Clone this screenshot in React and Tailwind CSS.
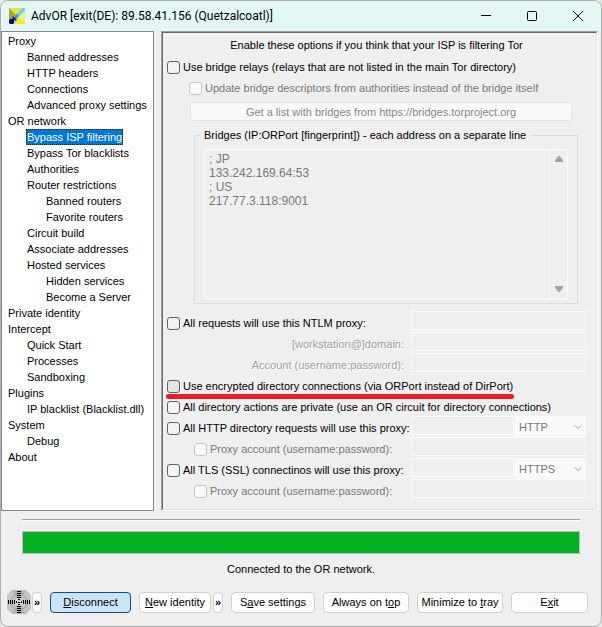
import React, { useState } from 'react'
import { ChevronDown } from 'lucide-react'

const pages = [
  { name: 'Proxy', level: 0 },
  { name: 'Banned addresses', level: 1 },
  { name: 'HTTP headers', level: 1 },
  { name: 'Connections', level: 1 },
  { name: 'Advanced proxy settings', level: 1 },
  { name: 'OR network', level: 0 },
  { name: 'Bypass ISP filtering', level: 1 },
  { name: 'Bypass Tor blacklists', level: 1 },
  { name: 'Authorities', level: 1 },
  { name: 'Router restrictions', level: 1 },
  { name: 'Banned routers', level: 2 },
  { name: 'Favorite routers', level: 2 },
  { name: 'Circuit build', level: 1 },
  { name: 'Associate addresses', level: 1 },
  { name: 'Hosted services', level: 1 },
  { name: 'Hidden services', level: 2 },
  { name: 'Become a Server', level: 2 },
  { name: 'Private identity', level: 0 },
  { name: 'Intercept', level: 0 },
  { name: 'Quick Start', level: 1 },
  { name: 'Processes', level: 1 },
  { name: 'Sandboxing', level: 1 },
  { name: 'Plugins', level: 0 },
  { name: 'IP blacklist (Blacklist.dll)', level: 1 },
  { name: 'System', level: 0 },
  { name: 'Debug', level: 1 },
  { name: 'About', level: 0 },
]

const indents = ['pl-[5px]', 'pl-6', 'pl-[43px]']

function AppLogo() {
  return (
    <svg viewBox="0 0 16 16" className="size-4 shrink-0" aria-hidden="true">
      <rect width="16" height="16" fill="#dede20" />
      <path d="M0 0H16L8 8Z" fill="#d8e850" />
      <path d="M0 0L8 8L0 16Z" fill="#a0b010" />
      <path d="M0 16L8 8L16 16Z" fill="#f0f000" />
      <path d="M16 0V16L8 8Z" fill="#e8f090" />
      <path d="M8 8L15.5 0.5" stroke="#80c8f8" strokeWidth="3.6" />
      <path d="M5.5 10.5L9 7" stroke="#4090e0" strokeWidth="2.6" />
      <path d="M4 8L8 12L6.5 13L3 9.5Z" fill="#1030c0" />
      <circle cx="2.6" cy="13.4" r="2.6" fill="#0000a0" />
      <rect x="4" y="10" width="2" height="2" fill="#0008e0" />
    </svg>
  )
}

function TitleBar() {
  return (
    <header className="flex h-[30px] items-center bg-[#e4f7f5] pl-2">
      <AppLogo />
      <h1 className="ml-1.5 flex-1 truncate font-[Roboto,sans-serif] text-[12px]">
        AdvOR [exit(DE): 89.58.41.156 (Quetzalcoatl)]
      </h1>
      <button aria-label="Minimize" className="flex h-full w-[46px] items-center justify-center">
        <svg viewBox="0 0 10 10" className="size-[10px]" fill="none" stroke="#000" shapeRendering="crispEdges">
          <path d="M0 4.5H10" />
        </svg>
      </button>
      <button aria-label="Maximize" className="flex h-full w-[46px] items-center justify-center">
        <svg viewBox="0 0 10 10" className="size-[10px]" fill="none" stroke="#000">
          <rect x="0.5" y="0.5" width="9" height="9" rx="1" />
        </svg>
      </button>
      <button aria-label="Close" className="flex h-full w-[46px] items-center justify-center">
        <svg viewBox="0 0 10 10" className="size-[10px]" fill="none" stroke="#000">
          <path d="M0 0L10 10M10 0L0 10" />
        </svg>
      </button>
    </header>
  )
}

function Sidebar({ page, setPage }) {
  return (
    <nav className="w-[153px] shrink-0 border border-[#828790] bg-white py-px">
      <ul>
        {pages.map((p) => (
          <li key={p.name} className={`flex ${indents[p.level]}`}>
            <button
              onClick={() => setPage(p.name)}
              className={
                page === p.name
                  ? 'h-4 whitespace-nowrap bg-[#0078d7] px-px text-white outline-1 -outline-offset-1 outline-dotted outline-[#3a2000]'
                  : 'h-4 whitespace-nowrap px-px'
              }
            >
              {p.name}
            </button>
          </li>
        ))}
      </ul>
    </nav>
  )
}

function Check({ label, disabled, pressed, className = '' }) {
  return (
    <label className={`flex items-center gap-[3px] whitespace-nowrap leading-4 ${disabled ? 'text-[#787878]' : ''} ${className}`}>
      <input
        type="checkbox"
        disabled={disabled}
        className={`size-[13px] shrink-0 appearance-none rounded-[3px] border ${
          disabled ? 'border-[#c5c5c5] bg-[#f9f9f9]' : pressed ? 'border-[#626262] bg-[#e6e6e6]' : 'border-[#626262] bg-[#f3f3f3]'
        } checked:bg-[#0067c0]`}
      />
      {label}
    </label>
  )
}

function Field({ label }) {
  return (
    <input
      type="text"
      disabled
      aria-label={label}
      className="h-[19px] min-w-0 flex-1 border border-[#fbfbfb] bg-[#efefef] px-1"
    />
  )
}

function ProxyType({ label, value }) {
  return (
    <div className="relative w-[71px] shrink-0 text-[#787878]">
      <select disabled aria-label={label} defaultValue={value} className="h-[21px] w-full appearance-none bg-[#fafafa] pl-1 opacity-100">
        <option>HTTP</option>
        <option>HTTPS</option>
        <option>SOCKS4</option>
        <option>SOCKS5</option>
      </select>
      <ChevronDown size={12} strokeWidth={2} className="pointer-events-none absolute top-[5px] right-[2px] text-[#a0a0a0]" />
    </div>
  )
}

// label column on the left, field column on the right
function Row({ left, children }) {
  return (
    <div className="flex h-[21px] items-start">
      <div className="w-[244px] shrink-0 pt-1">{left}</div>
      <div className="flex min-w-0 flex-1 gap-px">{children}</div>
    </div>
  )
}

function EtchedLabel({ children }) {
  return (
    <p className="pr-[7px] text-right leading-4 text-[#a0a0a0] [text-shadow:1px_1px_0_#fff]">{children}</p>
  )
}

function BridgeList() {
  return (
    <fieldset className="ml-[27px] mr-2 border border-[#dcdcdc] px-[9px] pb-1">
      <legend className="-ml-1 px-1 leading-4">Bridges (IP:ORPort [fingerprint]) - each address on a separate line</legend>
      <div className="mt-[6px] flex h-[150px] border border-[#fbfbfb]">
        <textarea
          disabled
          aria-label="Bridges"
          defaultValue={'; JP\n133.242.169.64:53\n; US\n217.77.3.118:9001'}
          className="min-w-0 flex-1 resize-none overflow-hidden py-0.5 pl-1 text-[12px] leading-[14px] text-[#787878]"
        />
        <div className="flex w-[18px] flex-col items-center justify-between border-l border-[#fbfbfb] py-1.5">
          <svg viewBox="0 0 8 6" className="h-1.5 w-2" fill="#a3a3a3" aria-hidden="true">
            <path d="M3.3 0H4.7L8 4.5V6H0V4.5Z" />
          </svg>
          <svg viewBox="0 0 8 6" className="h-1.5 w-2" fill="#a3a3a3" aria-hidden="true">
            <path d="M3.3 6H4.7L8 1.5V0H0V1.5Z" />
          </svg>
        </div>
      </div>
    </fieldset>
  )
}

function BypassPanel() {
  return (
    <main className="min-w-0 flex-1 border border-t-[#a0a0a0] border-l-[#a0a0a0] border-r-white border-b-white">
      <div className="h-full border border-t-[#696969] border-l-[#696969] border-r-[#e3e3e3] border-b-[#e3e3e3] pl-1 pr-[10px] pb-[9px]">
        <p className="pt-1 text-center leading-4">Enable these options if you think that your ISP is filtering Tor</p>
        <Check className="mt-1.5" label="Use bridge relays (relays that are not listed in the main Tor directory)" />
        <Check className="mt-[5px] ml-[22px]" disabled label="Update bridge descriptors from authorities instead of the bridge itself" />
        <div className="my-1.5 flex pl-[23px] pr-[14px]">
          <button disabled className="h-[19px] flex-1 rounded-[3px] border border-[#e6e6e6] bg-[#f9f9f9] leading-4 text-[#878787]">
            Get a list with bridges from https://bridges.torproject.org
          </button>
        </div>
        <BridgeList />

        <div className="mt-[7px]">
          <Row left={<Check label="All requests will use this NTLM proxy:" />}>
            <Field label="NTLM proxy" />
          </Row>
          <Row left={<EtchedLabel>[workstation@]domain:</EtchedLabel>}>
            <Field label="NTLM domain" />
          </Row>
          <Row left={<EtchedLabel>Account (username:password):</EtchedLabel>}>
            <Field label="NTLM account" />
          </Row>
          <div className="relative h-[21px] pt-1">
            <Check pressed label="Use encrypted directory connections (via ORPort instead of DirPort)" />
            {/* marker stroke under the option */}
            <span className="absolute top-5 -left-px h-[5px] w-[348px] rounded-sm bg-[#ee1c24]" />
          </div>
          <div className="h-[21px] pt-1">
            <Check label="All directory actions are private (use an OR circuit for directory connections)" />
          </div>
          <Row left={<Check label="All HTTP directory requests will use this proxy:" />}>
            <Field label="HTTP directory proxy" />
            <ProxyType label="HTTP directory proxy type" value="HTTP" />
          </Row>
          <Row left={<Check className="ml-[27px]" disabled label="Proxy account (username:password):" />}>
            <Field label="HTTP proxy account" />
          </Row>
          <Row left={<Check label="All TLS (SSL) connectinos will use this proxy:" />}>
            <Field label="TLS proxy" />
            <ProxyType label="TLS proxy type" value="HTTPS" />
          </Row>
          <Row left={<Check className="ml-[27px]" disabled label="Proxy account (username:password):" />}>
            <Field label="TLS proxy account" />
          </Row>
        </div>
      </div>
    </main>
  )
}

function Btn({ children, className = '' }) {
  return (
    <button className={`h-[21px] whitespace-nowrap rounded-[4px] border border-[#d0d0d0] bg-[#fdfdfd] leading-4 ${className}`}>
      {children}
    </button>
  )
}

function Onion() {
  return (
    <svg viewBox="0 0 24 24" className="block size-6" aria-hidden="true">
      <path d="M5 0H19L24 5V19L19 24H5L0 19V5Z" fill="#c4c4c4" />
      <path d="M12 12L5 0.5H19ZM12 12L5 23.5H19Z" fill="#b2b2b2" />
      <circle cx="12" cy="12" r="8" fill="none" stroke="#a4a4a4" />
      <circle cx="12" cy="12" r="4" fill="#d2d2d2" />
      <g stroke="#000" fill="none" shapeRendering="crispEdges">
        <path d="M10 1.5H14M10 3.5H14M10 5.5H14M10 7.5H14M11 9.5H13" />
        <path d="M11 14.5H13M10 16.5H14M10 18.5H14M10 20.5H14M10 22.5H14" />
        <path d="M1.5 10V14M3.5 10V14M5.5 10V14M7.5 10V14M9.5 11V13" />
        <path d="M14.5 11V13M16.5 10V14M18.5 10V14M20.5 10V14M22.5 10V14" />
        <path d="M11 12.5H13" />
      </g>
    </svg>
  )
}

function Footer() {
  return (
    <footer className="pb-3">
      <div className="mx-[21px] mt-2 h-0.5 border-t border-b border-t-[#a0a0a0] border-b-white" />
      <div role="progressbar" aria-label="Connection" aria-valuenow={100} className="mx-[21px] mt-2.5 h-[23px] border border-[#bcbcbc] bg-[#06b025]" />
      <p className="mt-[7px] text-center leading-4">Connected to the OR network.</p>
      <div className="mt-[13px] flex items-center gap-2 pl-1.5 pr-[13px]">
        <div className="flex items-center gap-px">
          <button aria-label="Status">
            <Onion />
          </button>
          <Btn className="w-[10px] font-bold">»</Btn>
        </div>
        <button className="h-[21px] w-[81px] rounded-[4px] border border-[#005499] bg-[#cce4f7] leading-4">
          <u>D</u>isconnect
        </button>
        <div className="flex gap-0.5">
          <Btn className="w-[72px]"><u>N</u>ew identity</Btn>
          <Btn className="w-[10px] font-bold">»</Btn>
        </div>
        <Btn className="w-[84px]">S<u>a</u>ve settings</Btn>
        <Btn className="w-[86px]">Always on t<u>o</u>p</Btn>
        <Btn className="w-[86px]">Minimize to <u>t</u>ray</Btn>
        <Btn className="min-w-0 flex-1">E<u>x</u>it</Btn>
      </div>
    </footer>
  )
}

function App() {
  const [page, setPage] = useState('Bypass ISP filtering')

  return (
    <div className="min-h-screen bg-[#e8e8e8]">
      <div className="overflow-hidden rounded-lg border border-[#b0b0b0] bg-[#efefef] font-['Liberation_Sans',Arial,sans-serif] text-[11px] leading-4 text-black">
        <TitleBar />
        <div className="flex gap-[7px] pr-[3px]">
          <Sidebar page={page} setPage={setPage} />
          <BypassPanel />
        </div>
        <Footer />
      </div>
    </div>
  )
}

export default App
